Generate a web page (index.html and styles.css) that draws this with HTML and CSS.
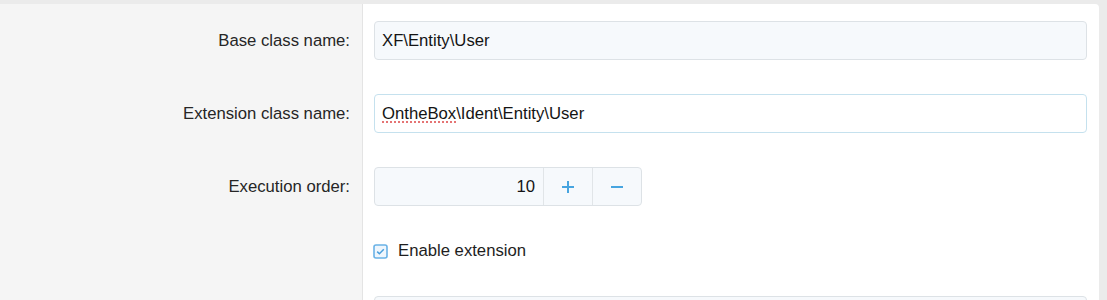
FILE: index.html
```html
<!DOCTYPE html>
<html lang="en">
<head>
  <meta charset="UTF-8" />
  <title>Class extension</title>
  <link rel="stylesheet" href="styles.css">
</head>
<body>
  <div class="panel">
    <div class="row">
      <div class="label">Base class name:</div>
      <div class="value">
        <div class="input">XF\Entity\User</div>
      </div>
    </div>

    <div class="row">
      <div class="label">Extension class name:</div>
      <div class="value">
        <div class="input focused"><span class="typo">OntheBox</span>\Ident\Entity\User</div>
      </div>
    </div>

    <div class="row">
      <div class="label">Execution order:</div>
      <div class="value">
        <div class="number">
          <div class="number-value">10</div>
          <div class="number-btn">
            <svg width="14" height="14" viewBox="0 0 14 14"><path d="M7 1v12M1 7h12" stroke="#47a5e0" stroke-width="2" /></svg>
          </div>
          <div class="number-btn">
            <svg width="14" height="14" viewBox="0 0 14 14"><path d="M1 7h12" stroke="#47a5e0" stroke-width="2" /></svg>
          </div>
        </div>
      </div>
    </div>

    <div class="row">
      <div class="label"></div>
      <div class="value">
        <label class="check">
          <svg class="box" width="15" height="15" viewBox="0 0 15 15">
            <rect x="1" y="1" width="13" height="13" rx="2" fill="#eef6fd" stroke="#6ab2e6" stroke-width="1.6" />
            <path d="M4.2 7.6l2.2 2.2 4.4-4.6" fill="none" stroke="#4a9fdc" stroke-width="1.5" />
          </svg>
          Enable extension
        </label>
      </div>
    </div>

    <div class="row">
      <div class="label"></div>
      <div class="value">
        <div class="input"></div>
      </div>
    </div>
  </div>
</body>
</html>
```

FILE: styles.css
```css
* {
  box-sizing: border-box;
}

body {
  margin: 0;
  background: #ebebeb;
  font-family: "Liberation Sans", Arial, sans-serif;
  font-size: 16.7px;
  color: #141414;
}

.panel {
  margin-top: 4px;
  width: 1099px;
  background: #fff;
  border-top-right-radius: 4px;
  overflow: hidden;
}

.row {
  display: flex;
}

.label {
  width: 363px;
  flex-shrink: 0;
  background: #f5f5f5;
  border-right: 1px solid #e4e4e4;
  padding: 17px 12px 17px 12px;
  text-align: right;
  color: #262626;
  display: flex;
  align-items: center;
  justify-content: flex-end;
}

.value {
  flex: 1;
  padding: 17px 12px 17px 11px;
}

.input {
  height: 39px;
  border: 1px solid #dde2e6;
  border-radius: 4px;
  background: #f6f9fc;
  padding: 0 7px;
  display: flex;
  align-items: center;
}

.input.focused {
  background: #fff;
  border-color: #c5e1ee;
}

.typo {
  text-decoration: underline dotted #e05a5a;
  text-underline-offset: 3px;
}

.number {
  display: flex;
  width: 268px;
  height: 39px;
  border: 1px solid #dde2e6;
  border-radius: 4px;
  background: #f6f9fc;
  overflow: hidden;
}

.number-value {
  flex: 1;
  display: flex;
  align-items: center;
  justify-content: flex-end;
  padding-right: 8px;
}

.number-btn {
  width: 49px;
  border-left: 1px solid #e1e5e8;
  display: flex;
  align-items: center;
  justify-content: center;
}

.check {
  display: flex;
  align-items: center;
  gap: 10px;
  height: 22px;
  color: #1e1e1e;
}

.box {
  margin-left: -1px;
}
```
